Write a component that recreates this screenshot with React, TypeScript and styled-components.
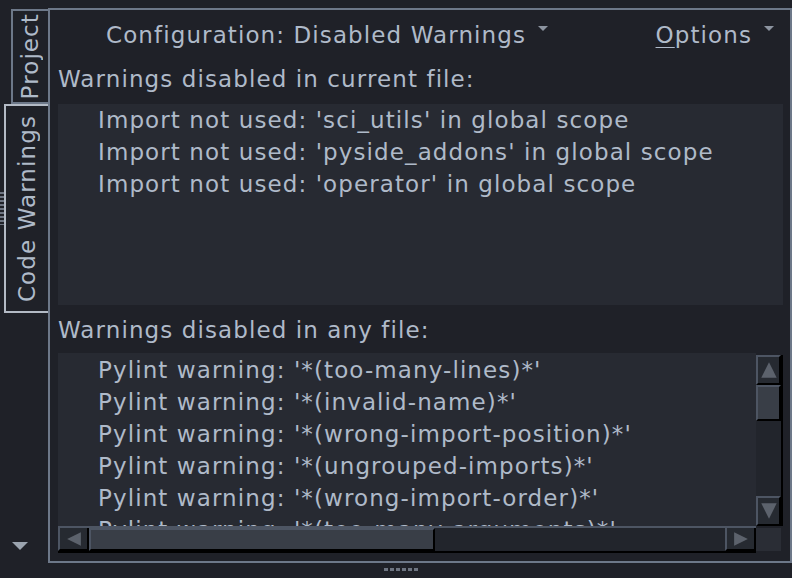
import React from 'react';
import styled, { createGlobalStyle } from 'styled-components';

const colors = {
  bg: '#1f2128',
  listBg: '#272a32',
  text: '#afbac9',
  frame: '#6d7889',
  activeTab: '#b3bac5',
  track: '#22252c',
  button: '#262a31',
  bevel: '#4d5563',
  thumb: '#393e47',
  arrow: '#5c626c',
  caret: '#8c94a0',
};

const GlobalStyle = createGlobalStyle`
  html, body {
    margin: 0;
    background: ${colors.bg};
  }
  body {
    font-family: "DejaVu Sans", "Noto Sans", sans-serif;
    letter-spacing: 1.1px;
    color: ${colors.text};
    -webkit-font-smoothing: antialiased;
  }
`;

const Page = styled.div`
  width: 792px;
  height: 578px;
  display: flex;
  flex-direction: column;
  overflow: hidden;
`;

const Body = styled.div`
  display: flex;
  padding-top: 8px;
  height: 555px;
`;

const Sidebar = styled.div`
  width: 48px;
  display: flex;
  flex-direction: column;
  align-items: flex-end;
  padding-top: 1px;
`;

const TabRow = styled.div`
  display: flex;
  align-items: center;
`;

const Grip = styled.div`
  width: 4px;
  height: 33px;
  background: repeating-linear-gradient(
    to bottom,
    #6e7582 0 2px,
    transparent 2px 4px
  );
`;

const Tab = styled.div<{ $active?: boolean; $w: number; $h: number }>`
  width: ${(p) => p.$w}px;
  height: ${(p) => p.$h}px;
  box-sizing: border-box;
  border: 2px solid ${(p) => (p.$active ? colors.activeTab : colors.frame)};
  border-right: none;
  display: flex;
  align-items: center;
  justify-content: center;
  background: ${colors.bg};
`;

const TabLabel = styled.span`
  writing-mode: vertical-rl;
  transform: rotate(180deg);
  font-size: 23px;
  line-height: 1;
  color: ${colors.text};
  white-space: nowrap;
`;

const SideFill = styled.div`
  flex: 1;
`;

const SideArrow = styled.svg`
  align-self: flex-start;
  margin: 0 0 12px 12px;
`;

const Panel = styled.div`
  flex: 1;
  box-sizing: border-box;
  border: 2px solid ${colors.frame};
  display: flex;
  flex-direction: column;
  padding: 0 7px 8px 8px;
`;

const Header = styled.div`
  height: 50px;
  display: flex;
  align-items: center;
  justify-content: space-between;
  padding: 0 9px 0 48px;
  font-size: 23px;
`;

const Menu = styled.div`
  display: flex;
  align-items: center;
  gap: 12px;
`;

const Mnemonic = styled.span`
  text-decoration: underline;
  text-underline-offset: 4px;
  text-decoration-thickness: 1px;
`;

const Caret = styled.svg`
  margin-top: -12px;
`;

const SectionLabel = styled.div<{ $h: number; $top?: number; $bottom?: number }>`
  height: ${(p) => p.$h}px;
  display: flex;
  align-items: center;
  font-size: 23px;
  padding-top: ${(p) => p.$top ?? 0}px;
  padding-bottom: ${(p) => p.$bottom ?? 0}px;
  box-sizing: border-box;
  white-space: nowrap;
`;

const List = styled.div<{ $h?: number }>`
  background: ${colors.listBg};
  ${(p) => (p.$h ? `height: ${p.$h}px;` : 'flex: 1;')}
  overflow: hidden;
`;

const ScrollList = styled.div`
  flex: 1;
  display: grid;
  grid-template-columns: 1fr 27px;
  grid-template-rows: 1fr 27px;
  min-height: 0;
`;

const Viewport = styled.div`
  background: ${colors.listBg};
  overflow: hidden;
  padding-top: 1px;
`;

const Row = styled.div`
  height: 32px;
  line-height: 32px;
  padding-left: 40px;
  font-size: 23px;
  white-space: nowrap;
`;

const VBar = styled.div`
  display: flex;
  flex-direction: column;
  background: ${colors.track};
  border-right: 2px solid #000;
  margin-top: 2px;
`;

const HBar = styled.div`
  display: flex;
  background: ${colors.track};
  border-top: 2px solid ${colors.bevel};
  border-bottom: 2px solid #000;
`;

const ScrollButton = styled.div<{ $dir: 'v' | 'h' }>`
  width: ${(p) => (p.$dir === 'v' ? 'auto' : '31px')};
  height: ${(p) => (p.$dir === 'v' ? '30px' : 'auto')};
  flex: none;
  background: ${colors.button};
  box-sizing: border-box;
  border-left: 2px solid ${colors.bevel};
  border-top: 2px solid ${colors.bevel};
  border-right: 2px solid #000;
  border-bottom: 2px solid #000;
  display: flex;
  align-items: center;
  justify-content: center;
`;

const HButton = styled(ScrollButton)`
  border-top: none;
`;

const Thumb = styled.div<{ $dir: 'v' | 'h' }>`
  background: ${colors.thumb};
  box-sizing: border-box;
  border-left: 2px solid ${colors.bevel};
  border-top: 2px solid ${colors.bevel};
  border-right: 2px solid #000;
  border-bottom: 2px solid #000;
  ${(p) => (p.$dir === 'v' ? 'height: 36px;' : 'width: 346px;')}
  flex: none;
`;

const Track = styled.div`
  flex: 1;
`;

const Corner = styled.div`
  background: #2a2d35;
  margin: 2px 2px 2px 0;
`;

const BottomGrip = styled.div`
  align-self: center;
  margin-top: 5px;
  margin-left: 10px;
  width: 34px;
  height: 3px;
  background: repeating-linear-gradient(
    to right,
    #6e7582 0 4px,
    transparent 4px 6px
  );
`;

const Triangle = ({ dir, size = 14 }: { dir: 'up' | 'down' | 'left' | 'right'; size?: number }) => {
  const pts = {
    up: '7,1 13,13 1,13',
    down: '1,1 13,1 7,13',
    left: '13,1 13,13 1,7',
    right: '1,1 13,7 1,13',
  }[dir];
  return (
    <svg width={size} height={size} viewBox="0 0 14 14">
      <polygon points={pts} fill={colors.arrow} />
    </svg>
  );
};

const DropCaret = () => (
  <Caret width="10" height="6" viewBox="0 0 10 6">
    <polygon points="0,0 10,0 5,5" fill={colors.caret} />
  </Caret>
);

const currentFile = [
  "Import not used: 'sci_utils' in global scope",
  "Import not used: 'pyside_addons' in global scope",
  "Import not used: 'operator' in global scope",
];

const anyFile = [
  "Pylint warning: '*(too-many-lines)*'",
  "Pylint warning: '*(invalid-name)*'",
  "Pylint warning: '*(wrong-import-position)*'",
  "Pylint warning: '*(ungrouped-imports)*'",
  "Pylint warning: '*(wrong-import-order)*'",
  "Pylint warning: '*(too-many-arguments)*'",
  "Pylint warning: '*(too-many-locals)*'",
];

export default function App() {
  return (
    <Page>
      <GlobalStyle />
      <Body>
        <Sidebar>
          <Tab $w={37} $h={95}>
            <TabLabel>Project</TabLabel>
          </Tab>
          <TabRow>
            <Grip />
            <Tab $active $w={44} $h={209}>
              <TabLabel>Code Warnings</TabLabel>
            </Tab>
          </TabRow>
          <SideFill />
          <SideArrow width="16" height="9" viewBox="0 0 16 9">
            <polygon points="0,0 16,0 8,8" fill="#9aa3ae" />
          </SideArrow>
        </Sidebar>
        <Panel>
          <Header>
            <Menu>
              <span>Configuration: Disabled Warnings</span>
              <DropCaret />
            </Menu>
            <Menu>
              <span>
                <Mnemonic>O</Mnemonic>ptions
              </span>
              <DropCaret />
            </Menu>
          </Header>
          <SectionLabel $h={44} $bottom={6}>
            Warnings disabled in current file:
          </SectionLabel>
          <List $h={201}>
            {currentFile.map((t) => (
              <Row key={t}>{t}</Row>
            ))}
          </List>
          <SectionLabel $h={48} $top={2}>
            Warnings disabled in any file:
          </SectionLabel>
          <ScrollList>
            <Viewport>
              {anyFile.map((t) => (
                <Row key={t}>{t}</Row>
              ))}
            </Viewport>
            <VBar>
              <ScrollButton $dir="v">
                <Triangle dir="up" size={18} />
              </ScrollButton>
              <Thumb $dir="v" />
              <Track />
              <ScrollButton $dir="v">
                <Triangle dir="down" size={18} />
              </ScrollButton>
            </VBar>
            <HBar>
              <HButton $dir="h">
                <Triangle dir="left" size={16} />
              </HButton>
              <Thumb $dir="h" />
              <Track />
              <HButton $dir="h">
                <Triangle dir="right" size={16} />
              </HButton>
            </HBar>
            <Corner />
          </ScrollList>
        </Panel>
      </Body>
      <BottomGrip />
    </Page>
  );
}
